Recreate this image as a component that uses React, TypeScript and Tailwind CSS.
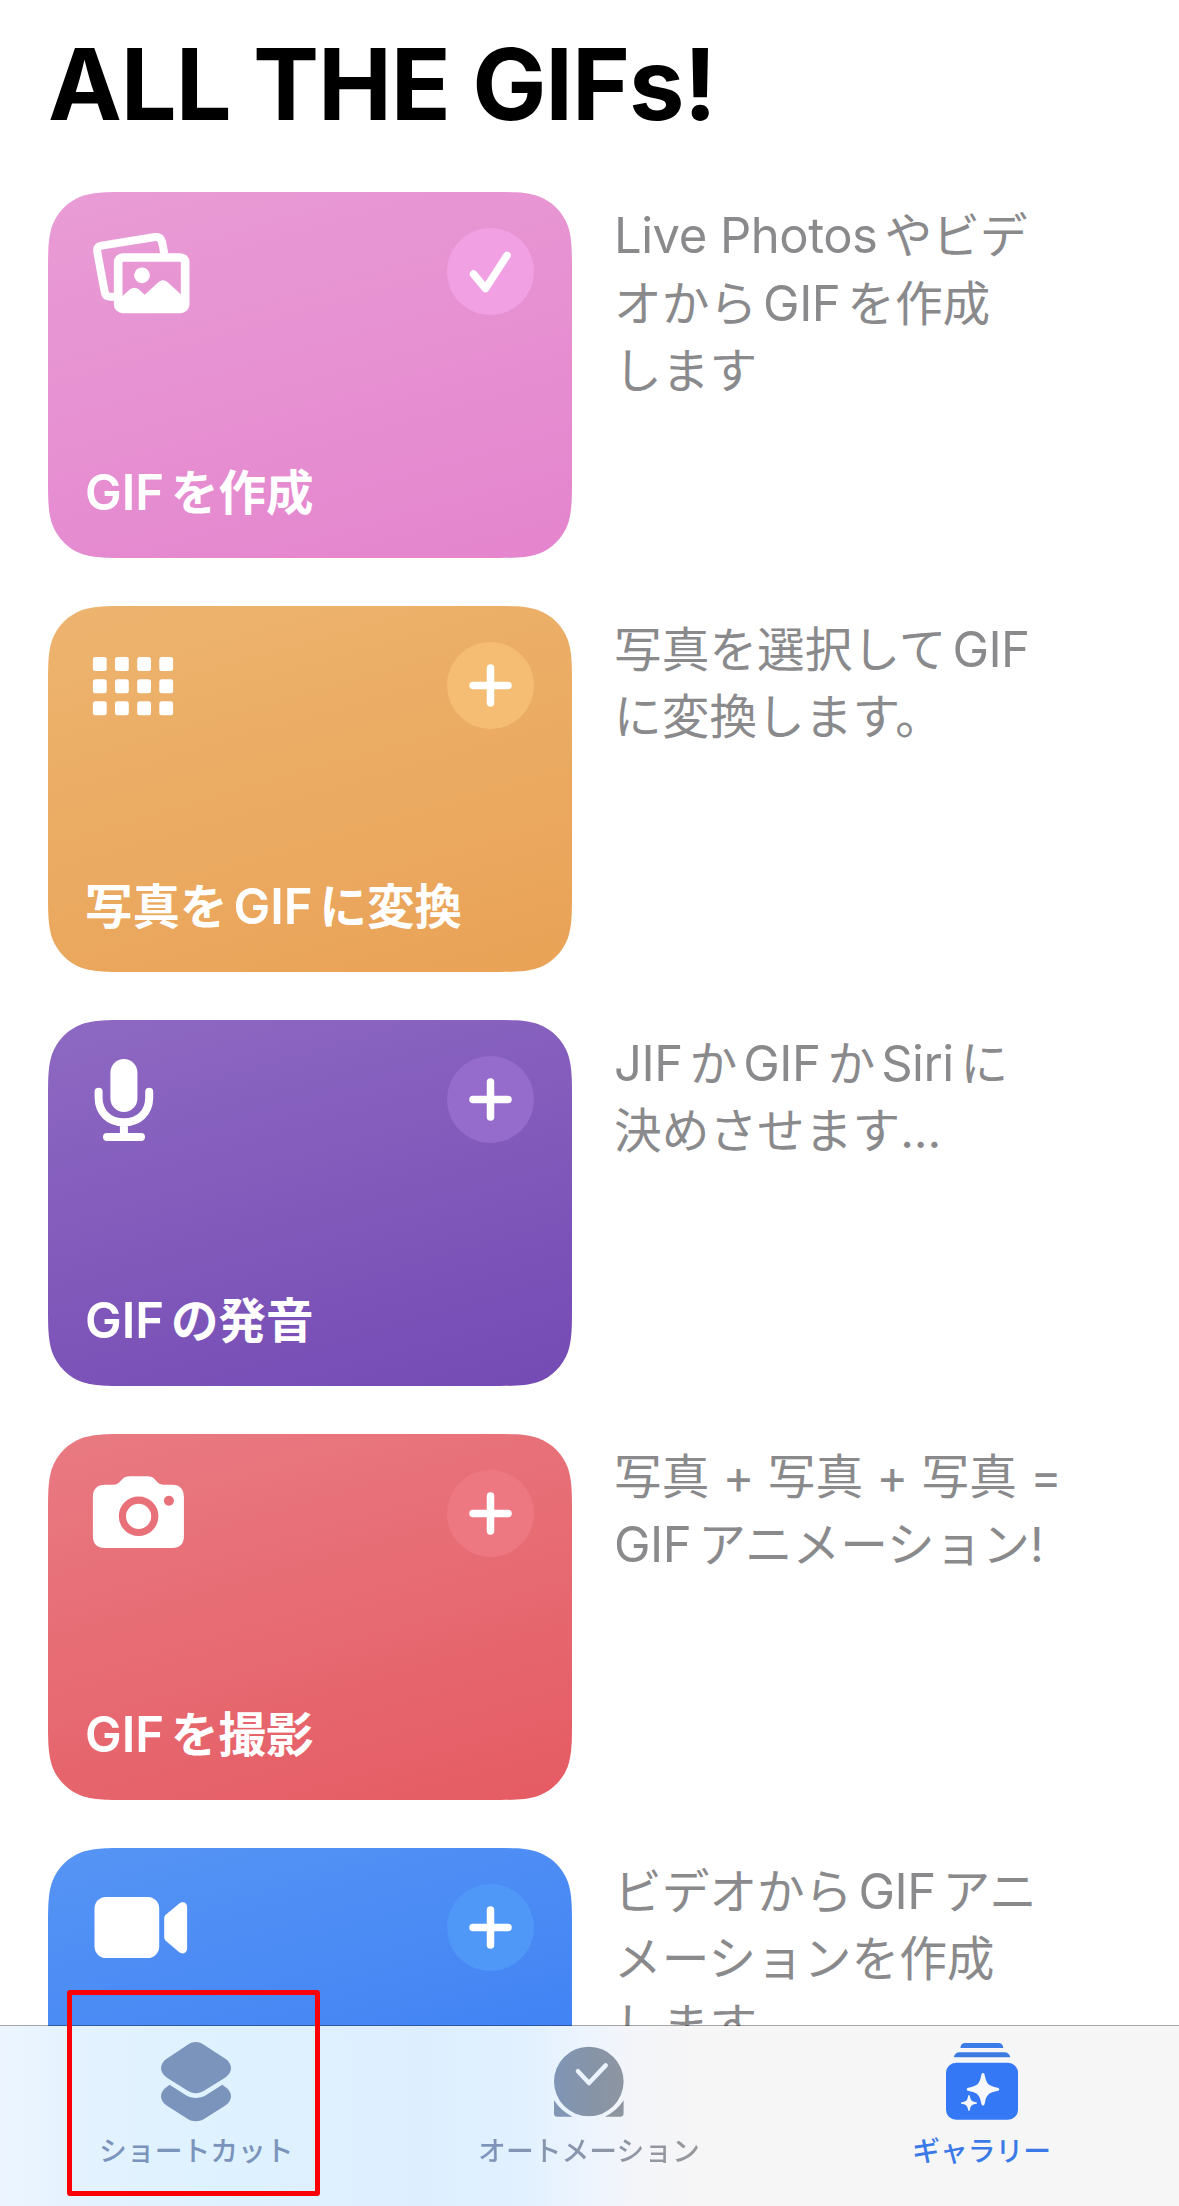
import type { ReactNode } from 'react';

const PhotosIcon = () => (
  <g transform="translate(-42 -40) scale(0.33333)">
    <path
      d="M211 326H198Q184 326 182 312L160 193Q157 176 173 173L333 147Q350 145 354 161L361 197"
      fill="none"
      stroke="white"
      strokeWidth="24"
    />
    <rect x="222.500" y="208.500" width="201" height="154" rx="14" fill="none" stroke="white" strokeWidth="26" />
    <circle cx="294" cy="262" r="23.500" fill="white" />
    <path
      d="M230 329L258 304Q271 294 284 304L302 320L343 283Q357 271 371 283L416 324V366H230Z"
      fill="white"
    />
  </g>
);

const GridIcon = () => (
  <g fill="white">
    {[15, 37.2, 59.3].map((y) =>
      [6.9, 29, 51.2, 73.3].map((x) => <rect key={`${x}-${y}`} x={x} y={y} width="13.800" height="14" rx="2.500" />)
    )}
  </g>
);

const MicIcon = () => (
  <g transform="translate(0 0.5)">
    <rect x="24.400" y="2.500" width="27" height="53" rx="13.500" fill="white" />
    <path
      d="M12.600 35.200V41C12.600 56 23 65.800 37.900 65.800S63.200 56 63.200 41V35.200M37.900 66V80M21 80.500H55"
      fill="none"
      stroke="white"
      strokeWidth="8"
      strokeLinecap="round"
    />
  </g>
);

const CameraIcon = () => (
  <g transform="translate(0 0.5)">
    <path
      d="M19 14.200H27C31 14.200 32.800 12.500 35 10L36.500 8.500C38.300 6.700 40 5.800 44 5.800H61C65 5.800 67 6.800 68.500 8.500L71 11.300C73 13.500 75 14.200 78 14.200H86C94 14.200 97.900 18.500 97.900 26.500V65.500C97.900 73.500 94 77.500 86 77.500H19C11 77.500 6.900 73.500 6.900 65.500V26.500C6.900 18.500 11 14.200 19 14.200Z"
      fill="white"
    />
    <circle cx="52.600" cy="45.800" r="16.200" fill="none" stroke="#e87078" strokeWidth="7.200" />
    <circle cx="82.900" cy="30.200" r="5" fill="#e87078" />
  </g>
);

const VideoIcon = () => (
  <g transform="translate(0 0.5)" fill="white">
    <rect x="8.500" y="12.500" width="64.700" height="61" rx="11.500" />
    <path d="M80 30L93 19.200C97 16.200 101.100 18 101.100 22.500V64C101.100 68.500 97 70.500 93 67.500L80 56.500C78.600 55.300 78.200 54 78.200 52.500V34C78.200 32.300 78.600 31.200 80 30Z" />
  </g>
);

interface Shortcut {
  title?: string;
  lines: string[];
  gradient: string;
  button: string;
  icon: ReactNode;
  added?: boolean;
}

const shortcuts: Shortcut[] = [
  {
    title: 'GIFを作成',
    lines: ['Live Photosやビデ', 'オからGIFを作成', 'します'],
    gradient: 'from-[#e99cd5] to-[#e484ce]',
    button: 'bg-[#f1a1e3]',
    icon: <PhotosIcon />,
    added: true,
  },
  {
    title: '写真をGIFに変換',
    lines: ['写真を選択してGIF', 'に変換します。'],
    gradient: 'from-[#edb46f] to-[#e9a256]',
    button: 'bg-[#f5bd74]',
    icon: <GridIcon />,
  },
  {
    title: 'GIFの発音',
    lines: ['JIFかGIFかSiriに', '決めさせます...'],
    gradient: 'from-[#8e69c2] to-[#744ab4]',
    button: 'bg-[#956bcb]',
    icon: <MicIcon />,
  },
  {
    title: 'GIFを撮影',
    lines: ['写真 + 写真 + 写真 =', 'GIFアニメーション!'],
    gradient: 'from-[#e97a82] to-[#e55b63]',
    button: 'bg-[#ee7882]',
    icon: <CameraIcon />,
  },
  {
    lines: ['ビデオからGIFアニ', 'メーションを作成', 'します'],
    gradient: 'from-[#5694f4] to-[#367af5]',
    button: 'bg-[#5098f8]',
    icon: <VideoIcon />,
  },
];

// Continuous-curvature corners for the cards
function squircle(w: number, h: number, r: number) {
  const a = 1.52866 * r;
  const b = 1.08849 * r;
  const c = 0.86841 * r;
  const d = 0.63149 * r;
  const e = 0.07491 * r;
  const f = 0.37282 * r;
  const g = 0.16906 * r;
  return `path("M${a} 0H${w - a}C${w - b} 0 ${w - c} 0 ${w - d} ${e}C${w - f} ${g} ${w - g} ${f} ${w - e} ${d}C${w} ${c} ${w} ${b} ${w} ${a}V${h - a}C${w} ${h - b} ${w} ${h - c} ${w - e} ${h - d}C${w - g} ${h - f} ${w - f} ${h - g} ${w - d} ${h - e}C${w - c} ${h} ${w - b} ${h} ${w - a} ${h}H${a}C${b} ${h} ${c} ${h} ${d} ${h - e}C${f} ${h - g} ${g} ${h - f} ${e} ${h - d}C0 ${h - c} 0 ${h - b} 0 ${h - a}V${a}C0 ${b} 0 ${c} ${e} ${d}C${g} ${f} ${f} ${g} ${d} ${e}C${c} 0 ${b} 0 ${a} 0Z")`;
}

// Latin runs get a little air when they sit next to kana or kanji
function MixedText({ text, latin }: { text: string; latin: string }) {
  return (
    <>
      {text.split(/([A-Za-z]+(?: [A-Za-z]+)*)/).map((part, i, all) =>
        i % 2 ? (
          <span key={i} className={`${latin} ${all[i - 1] ? 'ml-[6px]' : ''} ${all[i + 1] ? 'mr-[7px]' : ''}`}>
            {part}
          </span>
        ) : (
          part
        )
      )}
    </>
  );
}

function ShortcutCard({ item }: { item: Shortcut }) {
  return (
    <div
      className={`flex h-[366px] w-[524px] shrink-0 flex-col justify-between bg-linear-[164deg] ${item.gradient}`}
      style={{ clipPath: squircle(524, 366, 54) }}
    >
      <div className="flex justify-between px-[38px] pt-9">
        <svg width="110" height="87" viewBox="0 0 110 87">
          {item.icon}
        </svg>
        <div className={`h-[87px] w-[87px] rounded-full ${item.button}`}>
          <svg width="87" height="87" fill="none" stroke="white" strokeWidth="7.500" strokeLinecap="round" strokeLinejoin="round">
            {item.added ? <path d="M26.500 46L38.500 60.500L60 27.500" /> : <path d="M43.500 26V61M26 43.500H61" />}
          </svg>
        </div>
      </div>
      {item.title && (
        <div className="px-[37px] pb-[31px] text-[47.500px] leading-[68px] font-semibold whitespace-nowrap text-white">
          <MixedText text={item.title} latin="text-[49px] tracking-[0px]" />
        </div>
      )}
    </div>
  );
}

function Star({ cx, cy, r }: { cx: number; cy: number; r: number }) {
  return (
    <path
      transform={`translate(${cx} ${cy}) scale(${r})`}
      d="M0 -1C.09 -1 .1 -.9 .13 -.75C.22 -.35 .35 -.22 .75 -.13C.9 -.1 1 -.09 1 0C1 .09 .9 .1 .75 .13C.35 .22 .22 .35 .13 .75C.1 .9 .09 1 0 1C-.09 1 -.1 .9 -.13 .75C-.22 .35 -.35 .22 -.75 .13C-.9 .1 -1 .09 -1 0C-1 -.09 -.9 -.1 -.75 -.13C-.35 -.22 -.22 -.35 -.13 -.75C-.1 -.9 -.09 -1 0 -1Z"
      fill="#f6f8fc"
    />
  );
}

const tabs = [
  {
    label: 'ショートカット',
    color: 'text-[#7b94bb]',
    icon: (
      <svg width="70" height="80" viewBox="0 0 70 80" fill="#7b94bb">
        <path d="M27.500 2.300C32 -.7 37.600 -.7 42 2.300L64 16.500C72 21.500 72 30.500 64 35.700L43 48.800C38 52 31.500 52 26.800 48.800L6 35.700C-2 30.500 -2 21.500 6 16.500Z" />
        <path d="M8.500 42.800L25 53.200C31 56.800 38.600 56.800 44.800 53.200L61.300 42.800L64 44.700C72 50 72 58.500 64 63.800L43 77C38 80 31.500 80 26.800 77L6 63.800C-2 58.500 -2 50 6 44.700Z" />
      </svg>
    ),
  },
  {
    label: 'オートメーション',
    color: 'bg-linear-to-r from-[#7d94bb] via-[#8a95a8] to-[#98989b] bg-clip-text text-transparent',
    icon: (
      <svg width="70" height="80" viewBox="0 -4.7 70 80">
        <defs>
          <linearGradient id="clock">
            <stop offset="0" stopColor="#7f96b6" />
            <stop offset="0.5" stopColor="#8694a8" />
            <stop offset="1" stopColor="#8d95a1" />
          </linearGradient>
        </defs>
        <circle cx="34.800" cy="34.800" r="34.800" fill="url(#clock)" />
        <path d="M24 24.500L35 36.300L51.700 18.700" fill="none" stroke="#eaf3fe" strokeWidth="4.500" strokeLinecap="round" strokeLinejoin="round" />
        <path d="M0 53.500V66.500Q0 70 3.500 70H18.500C11 66 4.500 60.500 0 53.500Z" fill="#8196b4" />
        <path d="M69.600 53.500V66.500Q69.600 70 66.100 70H51.100C58.600 66 65.100 60.500 69.600 53.500Z" fill="#8d95a1" />
      </svg>
    ),
  },
  {
    label: 'ギャラリー',
    color: 'text-[#3a7ae8]',
    icon: (
      <svg width="72" height="80" viewBox="0 -1 72 80" fill="#3478f6">
        <path d="M14.300 5C14.800 1.800 16.300 0 19 0H52.600C55.300 0 56.800 1.800 57.300 5Z" fill="#3b7ce8" />
        <path d="M7.700 14.300C8.700 11 10.500 9.300 13.500 9.300H58.500C61.500 9.300 63.300 11 64.300 14.300Z" fill="#3b7ce0" />
        <rect y="19.700" width="72" height="57" rx="10" />
        <Star cx={37} cy={46.3} r={16.3} />
        <Star cx={23} cy={60} r={8} />
      </svg>
    ),
  },
];

export default function App() {
  return (
    <div
      className="relative flex h-[2206px] w-[1179px] flex-col overflow-hidden bg-white font-['Inter','Noto_Sans_CJK_JP',sans-serif]"
      lang="ja"
    >
      <main className="h-[2026px] shrink-0 overflow-hidden px-12">
        <h1 className="h-[192px] pt-[24px] text-[99px] leading-[120px] font-bold tracking-[-1.1px] text-black">ALL THE GIFs!</h1>
        <div className="flex flex-col gap-12">
          {shortcuts.map((item) => (
            <div key={item.lines[0]} className="flex h-[366px] gap-[42px]">
              <ShortcutCard item={item} />
              <p className="pt-[10px] text-[47.700px] leading-[67px] whitespace-nowrap text-[#8a8a8d]">
                {item.lines.map((line) => (
                  <span key={line} className="block">
                    <MixedText text={line} latin="text-[49px] tracking-[-0.5px]" />
                  </span>
                ))}
              </p>
            </div>
          ))}
        </div>
      </main>

      {/* The hairline is translucent and sits over the last row of the list */}
      <nav className="relative -mt-px flex h-[181px] shrink-0 border-t border-black/35 bg-linear-[90deg,#ecf5ff_0%,#e3f2ff_8%,#dff2ff_17%,#def0ff_30%,#ddeefe_36%,#e1f1ff_44%,#edf4fd_50%,#f4f5f9_54%,#f6f6f6_60%] bg-clip-padding pr-px">
        {tabs.map((tab) => (
          <div key={tab.label} className="flex flex-1 flex-col items-center pt-4">
            {tab.icon}
            <span className={`mt-[9px] text-[27.800px] leading-10 font-medium ${tab.color}`}>{tab.label}</span>
          </div>
        ))}
      </nav>

      {/* Highlight around the first tab */}
      <div className="absolute top-[1990px] left-[67px] h-[206px] w-[253px] rounded-[3px] border-[5px] border-[#fb0007]"></div>
    </div>
  );
}
